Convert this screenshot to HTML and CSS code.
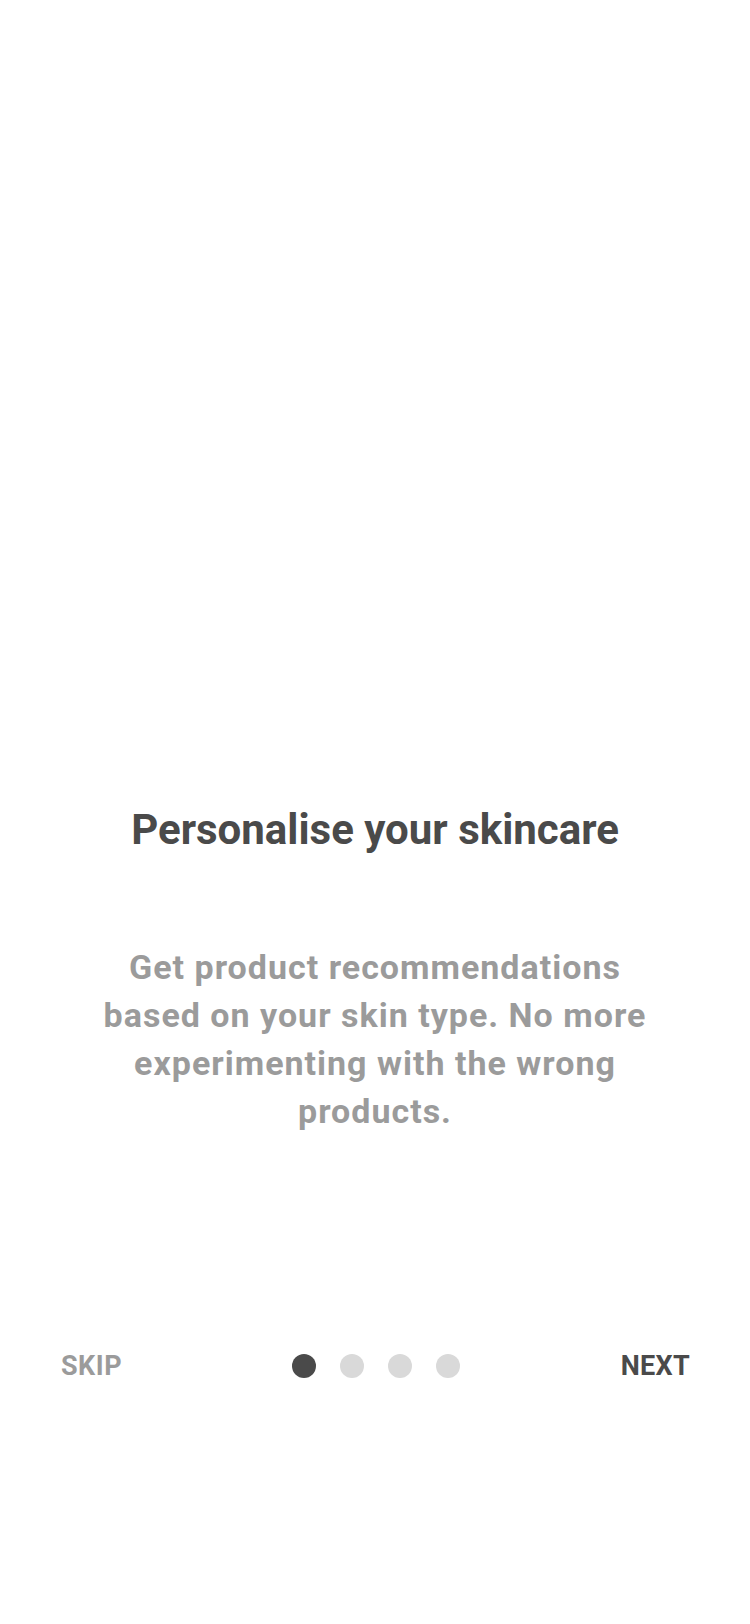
FILE: index.html
```html
<!DOCTYPE html>
<html lang="en">
<head>
<meta charset="utf-8">
<title>Onboarding</title>
<link rel="stylesheet" href="styles.css">
</head>
<body>
<main class="screen">
  <section class="slide">
    <h1 class="title">Personalise your skincare</h1>
    <p class="desc">Get product recommendations based on your skin type. No more experimenting with the wrong products.</p>
  </section>
  <nav class="controls">
    <button class="btn btn-skip" type="button">SKIP</button>
    <div class="dots">
      <span class="dot active"></span>
      <span class="dot"></span>
      <span class="dot"></span>
      <span class="dot"></span>
    </div>
    <button class="btn btn-next" type="button">NEXT</button>
  </nav>
</main>
</body>
</html>
```
FILE: styles.css
```css
* { box-sizing: border-box; }
html, body {
  margin: 0;
  padding: 0;
  background: #ffffff;
}
body {
  font-family: Roboto, "Noto Sans", "Liberation Sans", sans-serif;
}
.screen {
  width: 750px;
  height: 1624px;
  display: flex;
  flex-direction: column;
  background: #ffffff;
}
.slide {
  display: flex;
  flex-direction: column;
  align-items: center;
  padding: 805px 95px 0;
}
.title {
  margin: 0;
  font-size: 42px;
  line-height: 50px;
  font-weight: 700;
  color: #4a4a4a;
  text-align: center;
}
.desc {
  margin: 88px 0 0;
  font-size: 34px;
  line-height: 48px;
  font-weight: 700;
  letter-spacing: 1px;
  color: #9b9b9b;
  text-align: center;
}
.controls {
  margin-top: 207px;
  height: 48px;
  padding: 0 60px 0 61px;
  display: flex;
  align-items: center;
  justify-content: space-between;
  position: relative;
}
.btn {
  border: 0;
  background: none;
  padding: 0;
  font-family: inherit;
  font-size: 27px;
  font-weight: 700;
  line-height: 48px;
  letter-spacing: 0.5px;
}
.btn-skip { color: #9b9b9b; }
.btn-next { color: #4a4a4a; letter-spacing: 0.3px; }
.dots {
  display: flex;
  gap: 24px;
  position: absolute;
  left: 292px;
  top: 12px;
}
.dot {
  width: 24px;
  height: 24px;
  border-radius: 50%;
  background: #d9d9d9;
}
.dot.active { background: #4a4a4a; }
```
